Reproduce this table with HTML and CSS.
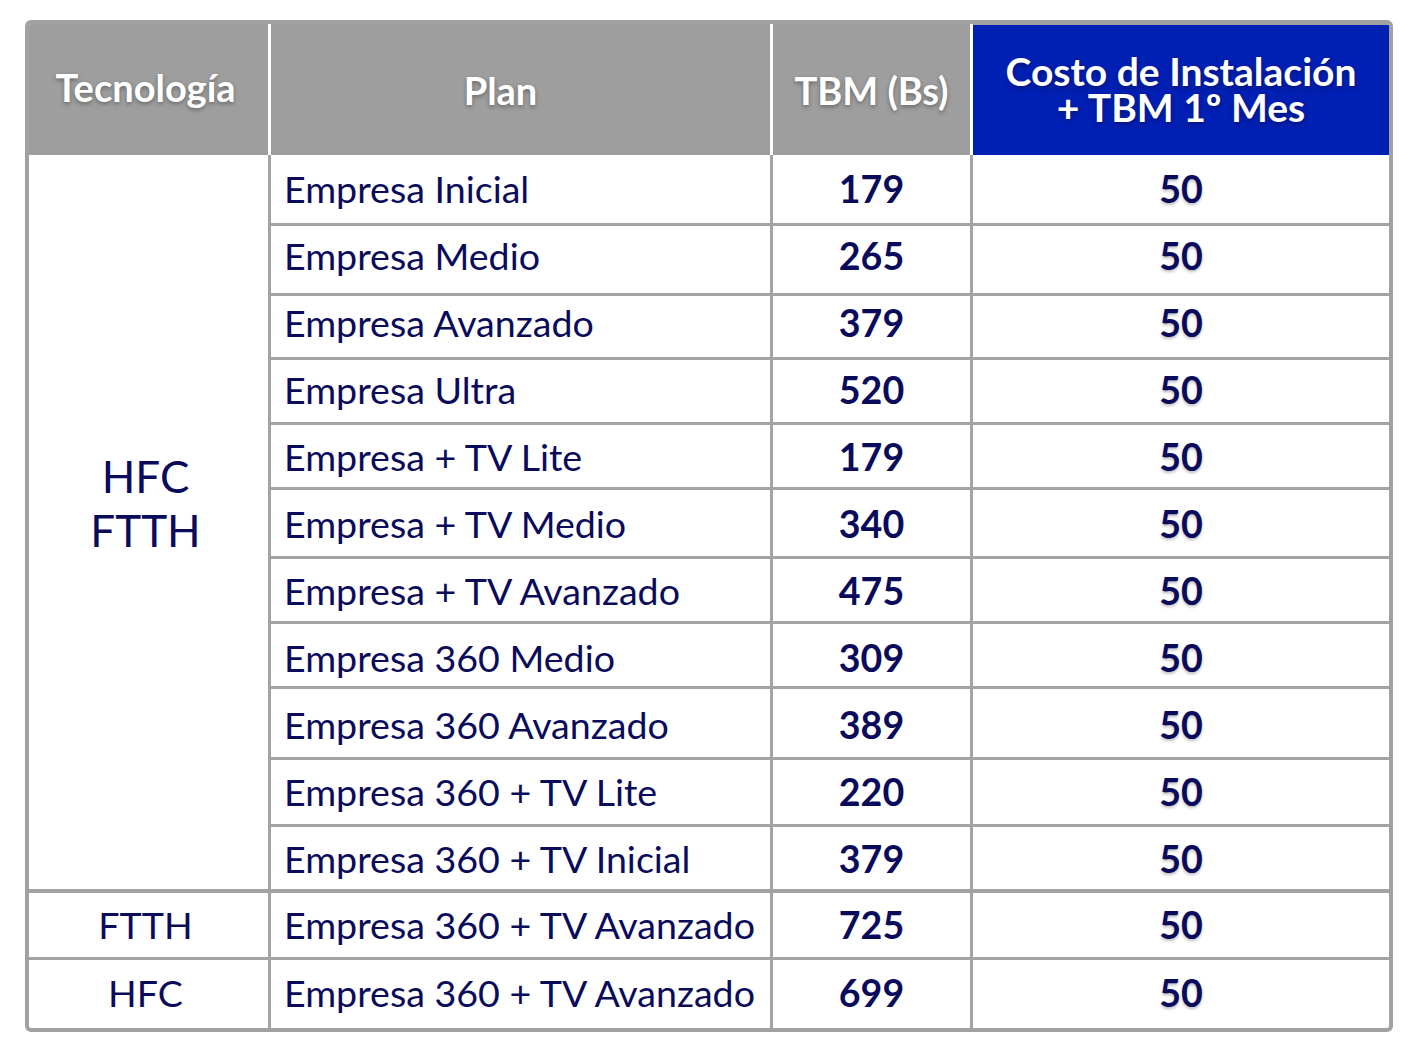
FILE: index.html
```html
<!DOCTYPE html>
<html lang="es">
<head>
<meta charset="utf-8">
<title>Planes Empresa</title>
<link rel="stylesheet" href="styles.css">
</head>
<body>
<div class="frame">
  <table class="plans">
    <colgroup>
      <col class="c-tech">
      <col class="c-plan">
      <col class="c-tbm">
      <col class="c-cost">
    </colgroup>
    <thead>
      <tr>
        <th class="h-tech">Tecnología</th>
        <th class="h-plan">Plan</th>
        <th class="h-tbm">TBM (Bs)</th>
        <th class="h-cost"><span class="blue"><span class="ln">Costo de Instalación</span><span class="ln">+ TBM 1º Mes</span></span></th>
      </tr>
    </thead>
    <tbody>
      <tr class="first">
        <td class="tech big" rowspan="11"><span>HFC<br>FTTH</span></td>
        <td class="plan">Empresa Inicial</td><td class="num">179</td><td class="cost">50</td>
      </tr>
      <tr><td class="plan">Empresa Medio</td><td class="num">265</td><td class="cost">50</td></tr>
      <tr><td class="plan">Empresa Avanzado</td><td class="num">379</td><td class="cost">50</td></tr>
      <tr><td class="plan">Empresa Ultra</td><td class="num">520</td><td class="cost">50</td></tr>
      <tr><td class="plan">Empresa + TV Lite</td><td class="num">179</td><td class="cost">50</td></tr>
      <tr><td class="plan">Empresa + TV Medio</td><td class="num">340</td><td class="cost">50</td></tr>
      <tr><td class="plan">Empresa + TV Avanzado</td><td class="num">475</td><td class="cost">50</td></tr>
      <tr><td class="plan">Empresa 360 Medio</td><td class="num">309</td><td class="cost">50</td></tr>
      <tr><td class="plan">Empresa 360 Avanzado</td><td class="num">389</td><td class="cost">50</td></tr>
      <tr><td class="plan">Empresa 360 + TV Lite</td><td class="num">220</td><td class="cost">50</td></tr>
      <tr><td class="plan">Empresa 360 + TV Inicial</td><td class="num">379</td><td class="cost">50</td></tr>
      <tr class="r12">
        <td class="tech">FTTH</td>
        <td class="plan">Empresa 360 + TV Avanzado</td><td class="num">725</td><td class="cost">50</td>
      </tr>
      <tr class="r13">
        <td class="tech">HFC</td>
        <td class="plan">Empresa 360 + TV Avanzado</td><td class="num">699</td><td class="cost">50</td>
      </tr>
    </tbody>
  </table>
</div>
</body>
</html>
```

FILE: styles.css
```css
html, body {
  margin: 0;
  padding: 0;
  background: #ffffff;
}

body {
  padding: 20px 0 0 25px;
  font-family: "Lato", "Liberation Sans", sans-serif;
  color: #0b0b5c;
}

.frame {
  width: 1368px;
  box-sizing: border-box;
  border: 4px solid #a1a1a1;
  border-radius: 6px;
  background: #ffffff;
  overflow: hidden;
}

.plans {
  width: 100%;
  border-collapse: separate;
  border-spacing: 0;
  table-layout: fixed;
}

.c-tech { width: 239px; }
.c-plan { width: 502px; }
.c-tbm  { width: 200px; }
.c-cost { width: auto; }

/* header */
.plans th {
  height: 131px;
  padding: 0;
  background: #9e9e9e;
  color: #ffffff;
  font-size: 38px;
  font-weight: 700;
  line-height: 38px;
  text-align: center;
  vertical-align: middle;
  text-shadow: 0 2px 4px rgba(0, 0, 0, 0.35);
  box-sizing: border-box;
}

.plans th + th {
  border-left: 3px solid #ffffff;
}

.plans th.h-tech { padding: 0 6px 6px 0; }
.plans th.h-plan { padding: 0 40px 0 0; }
.plans th.h-tbm  { padding: 0; }

.plans th.h-cost {
  padding: 1px 0 0 0;
  vertical-align: top;
}

.blue {
  display: flex;
  flex-direction: column;
  align-items: center;
  justify-content: center;
  height: 130px;
  box-sizing: border-box;
  padding-bottom: 2px;
  background: #001fb3;
  font-size: 39px;
}

.ln {
  display: block;
  height: 36px;
  line-height: 36px;
}

/* body */
.plans td {
  height: 67px;
  padding: 0;
  box-sizing: border-box;
  border-top: 3px solid #a3a3a3;
  vertical-align: middle;
  font-size: 37.6px;
  line-height: 40px;
}

.plans td + td { border-left: 3px solid #a3a3a3; }
.plans tr:not(.first):not(.r12):not(.r13) td.plan { border-left: 3px solid #a3a3a3; }

.plans tbody tr:nth-child(1) td { border-top: 0; height: 68px; }
.plans tbody tr:nth-child(2) td { height: 70px; padding-bottom: 8px; }
.plans tbody tr:nth-child(3) td { height: 64px; padding-bottom: 8px; }
.plans tbody tr:nth-child(4) td { height: 65px; padding-bottom: 2px; }
.plans tbody tr:nth-child(5) td { height: 65px; padding-top: 2px; }
.plans tbody tr:nth-child(6) td { height: 69px; padding-top: 2px; }
.plans tbody tr:nth-child(7) td { height: 65px; padding-top: 2px; }
.plans tbody tr:nth-child(8) td { height: 65px; padding-top: 6px; }
.plans tbody tr:nth-child(9) td { height: 71px; padding-top: 4px; }
.plans tbody tr:nth-child(10) td { height: 67px; }
.plans tbody tr:nth-child(11) td { height: 65px; padding-top: 2px; }
.plans tbody tr.r12 td { height: 68px; border-top-width: 4px; }
.plans tbody tr.r13 td { height: 71px; padding-bottom: 2px; }

.plans td.tech {
  text-align: center;
  font-weight: 400;
  padding-right: 6px;
}

.plans td.tech.big {
  height: auto;
  font-size: 44px;
  line-height: 54px;
  padding-top: 0;
  padding-bottom: 38px;
}

.plans td.plan {
  padding-left: 13px;
  text-align: left;
  white-space: nowrap;
}

.num {
  text-align: center;
  font-weight: 700;
}

.cost {
  text-align: center;
  font-weight: 700;
  text-shadow: 0 2px 3px rgba(0, 0, 0, 0.25);
}
```
